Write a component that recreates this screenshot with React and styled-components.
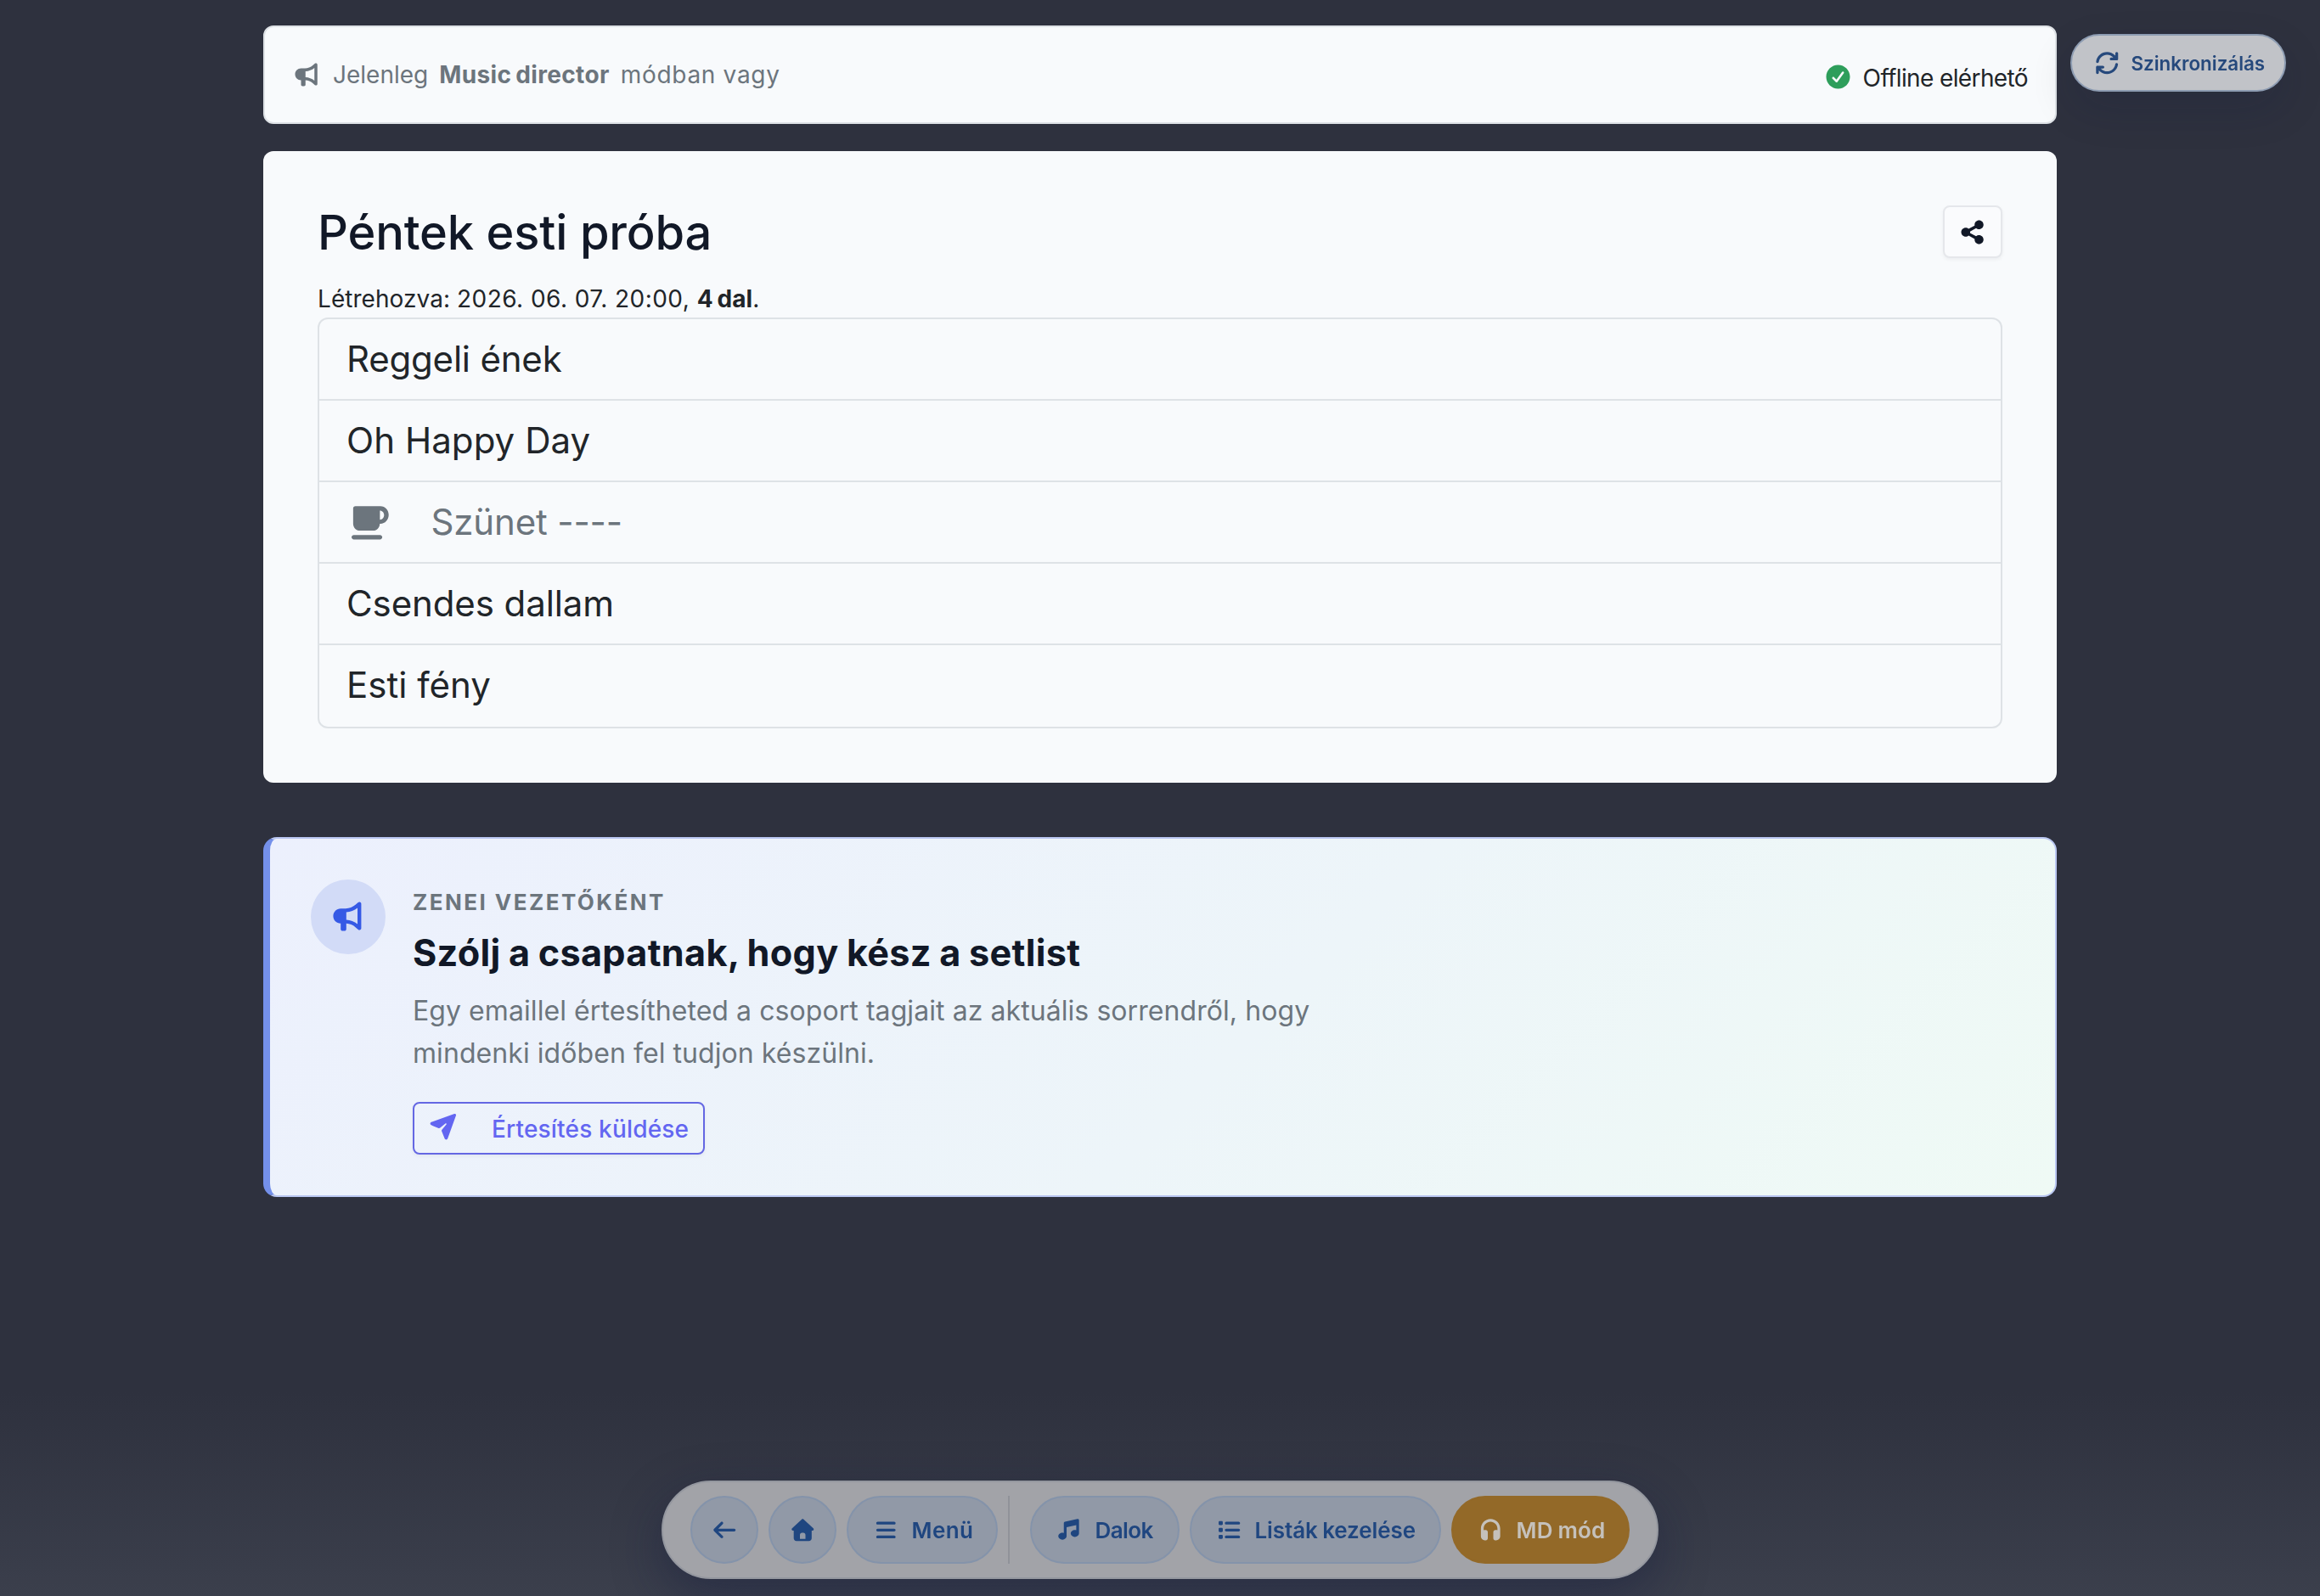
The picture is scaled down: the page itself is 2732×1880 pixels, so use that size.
/**
 *
 * SetlistPage
 *
 */

import React from 'react';
import styled, { createGlobalStyle, css } from 'styled-components';

const GlobalStyle = createGlobalStyle`
  * {
    box-sizing: border-box;
  }
  body {
    margin: 0;
    min-height: 1880px;
    background: linear-gradient(180deg, #2e313e 0, #2e313e 1640px, #3b3f4c 1880px);
    font-family: Inter, sans-serif;
    font-size: 28px;
    line-height: 42px;
    color: #212529;
  }
  h1, h2, p, ul {
    margin: 0;
    padding: 0;
  }
`;

// icons share a 640 grid
const ICONS = {
  bullhorn:
    'M525.2 82.9C536.7 88 544 99.4 544 112L544 528C544 540.6 536.7 552 525.2 557.1C513.7 562.2 500.4 560.3 490.9 552L444.3 511.3C400.7 473.2 345.6 451 287.9 448.3L287.9 544C287.9 561.7 273.6 576 255.9 576L223.9 576C206.2 576 191.9 561.7 191.9 544L191.9 448C121.3 448 64 390.7 64 320C64 249.3 121.3 192 192 192L276.5 192C338.3 191.8 397.9 169.3 444.4 128.7L491 88C500.4 79.7 513.9 77.8 525.2 82.9zM288 384L288 384.2C358.3 386.9 425.8 412.7 480 457.6L480 182.3C425.8 227.2 358.3 253 288 255.7L288 384z',
  check:
    'M320 576C178.6 576 64 461.4 64 320C64 178.6 178.6 64 320 64C461.4 64 576 178.6 576 320C576 461.4 461.4 576 320 576zM438 209.7C427.3 201.9 412.3 204.3 404.5 215L285.1 379.2L233 327.1C223.6 317.7 208.4 317.7 199.1 327.1C189.8 336.5 189.7 351.7 199.1 361L271.1 433C276.1 438 282.9 440.5 289.9 440C296.9 439.5 303.3 435.9 307.4 430.2L443.3 243.2C451.1 232.5 448.7 217.5 438 209.7z',
  share:
    'M448 256C501 256 544 213 544 160C544 107 501 64 448 64C395 64 352 107 352 160C352 165.4 352.5 170.8 353.3 176L223.6 248.1C206.7 233.1 184.4 224 160 224C107 224 64 267 64 320C64 373 107 416 160 416C184.4 416 206.6 406.9 223.6 391.9L353.3 464C352.4 469.2 352 474.5 352 480C352 533 395 576 448 576C501 576 544 533 544 480C544 427 501 384 448 384C423.6 384 401.4 393.1 384.4 408.1L254.7 336C255.6 330.8 256 325.5 256 320C256 314.5 255.5 309.2 254.7 304L384.4 231.9C401.3 246.9 423.6 256 448 256z',
  cup:
    'M128 88L488 88C554 88 606 144 606 214C606 284 554 341 488 341L478 341C476 396 438 440 384 440L192 440C138 440 96 396 96 342L96 120C96 102 110 88 128 88zM480 152L480 282C514 282 540 254 540 217C540 180 514 152 480 152zM106 502L482 502C499 502 514 517 514 534.5C514 552 499 567 482 567L106 567C88 567 73 552 73 534.5C73 517 88 502 106 502z',
  plane:
    'M568.4 37.7C578.2 34.2 589 36.7 596.4 44C603.8 51.3 606.2 62.2 602.7 72L424.7 568.9C419.7 582.8 406.6 592 391.9 592C377.7 592 364.9 583.4 359.6 570.3L295.4 412.3C290.9 401.3 292.9 388.7 300.6 379.7L395.1 267.3C400.2 261.2 399.8 252.3 394.2 246.7C388.6 241.1 379.6 240.7 373.6 245.8L261.2 340.1C252.1 347.7 239.6 349.7 228.6 345.3L70.1 280.8C57 275.5 48.4 262.7 48.4 248.5C48.4 233.8 57.6 220.7 71.5 215.7L568.4 37.7z',
  arrowLeft:
    'M73.4 297.4C60.9 309.9 60.9 330.2 73.4 342.7L233.4 502.7C245.9 515.2 266.2 515.2 278.7 502.7C291.2 490.2 291.2 469.9 278.7 457.4L173.3 352L544 352C561.7 352 576 337.7 576 320C576 302.3 561.7 288 544 288L173.3 288L278.7 182.6C291.2 170.1 291.2 149.8 278.7 137.3C266.2 124.8 245.9 124.8 233.4 137.3L73.4 297.3z',
  house:
    'M341.8 72.6C329.5 61.2 310.5 61.2 298.3 72.6L74.3 280.6C64.7 289.6 61.5 303.5 66.3 315.7C71.1 327.9 82.8 336 96 336L112 336L112 512C112 547.3 140.7 576 176 576L464 576C499.3 576 528 547.3 528 512L528 336L544 336C557.2 336 569 327.9 573.8 315.7C578.6 303.5 575.4 289.5 565.8 280.6L341.8 72.6zM304 384L336 384C362.5 384 384 405.5 384 432L384 528L256 528L256 432C256 405.5 277.5 384 304 384z',
  bars:
    'M96 160C96 142.3 110.3 128 128 128L512 128C529.7 128 544 142.3 544 160C544 177.7 529.7 192 512 192L128 192C110.3 192 96 177.7 96 160zM96 320C96 302.3 110.3 288 128 288L512 288C529.7 288 544 302.3 544 320C544 337.7 529.7 352 512 352L128 352C110.3 352 96 337.7 96 320zM96 480C96 462.3 110.3 448 128 448L512 448C529.7 448 544 462.3 544 480C544 497.7 529.7 512 512 512L128 512C110.3 512 96 497.7 96 480z',
  music:
    'M532 71C539.6 77.1 544 86.3 544 96L544 400C544 444.2 501 480 448 480C395 480 352 444.2 352 400C352 355.8 395 320 448 320C459.2 320 470 321.6 480 324.6L480 207.9L256 257.7L256 464C256 508.2 213 544 160 544C107 544 64 508.2 64 464C64 419.8 107 384 160 384C171.2 384 182 385.6 192 388.6L192 160C192 145 202.4 132 217.1 128.8L505.1 64.8C514.6 62.7 524.5 65 532.1 71.1z',
  list:
    'M104 112C90.7 112 80 122.7 80 136L80 184C80 197.3 90.7 208 104 208L152 208C165.3 208 176 197.3 176 184L176 136C176 122.7 165.3 112 152 112L104 112zM256 128C238.3 128 224 142.3 224 160C224 177.7 238.3 192 256 192L544 192C561.7 192 576 177.7 576 160C576 142.3 561.7 128 544 128L256 128zM256 288C238.3 288 224 302.3 224 320C224 337.7 238.3 352 256 352L544 352C561.7 352 576 337.7 576 320C576 302.3 561.7 288 544 288L256 288zM256 448C238.3 448 224 462.3 224 480C224 497.7 238.3 512 256 512L544 512C561.7 512 576 497.7 576 480C576 462.3 561.7 448 544 448L256 448zM80 296L80 344C80 357.3 90.7 368 104 368L152 368C165.3 368 176 357.3 176 344L176 296C176 282.7 165.3 272 152 272L104 272C90.7 272 80 282.7 80 296zM104 432C90.7 432 80 442.7 80 456L80 504C80 517.3 90.7 528 104 528L152 528C165.3 528 176 517.3 176 504L176 456C176 442.7 165.3 432 152 432L104 432z',
  headphones:
    'M160 288C160 199.6 231.6 128 320 128C408.4 128 480 199.6 480 288L480 325.5C470 322 459.2 320 448 320L432 320C405.5 320 384 341.5 384 368L384 512C384 538.5 405.5 560 432 560L448 560C501 560 544 517 544 464L544 288C544 164.3 443.7 64 320 64C196.3 64 96 164.3 96 288L96 464C96 517 139 560 192 560L208 560C234.5 560 256 538.5 256 512L256 368C256 341.5 234.5 320 208 320L192 320C180.8 320 170 321.9 160 325.5L160 288z',
  rotate:
    'M129.9 292.5C143.2 199.5 223.3 128 320 128C373 128 421 149.5 455.8 184.2C456 184.4 456.2 184.6 456.4 184.8L464 192L416.1 192C398.4 192 384.1 206.3 384.1 224C384.1 241.7 398.4 256 416.1 256L544.1 256C561.8 256 576.1 241.7 576.1 224L576.1 96C576.1 78.3 561.8 64 544.1 64C526.4 64 512.1 78.3 512.1 96L512.1 149.4L500.8 138.7C454.5 92.6 390.5 64 320 64C191 64 84.3 159.4 66.6 283.5C64.1 301 76.2 317.2 93.7 319.7C111.2 322.2 127.4 310 129.9 292.6zM573.4 356.5C575.9 339 563.7 322.8 546.3 320.3C528.9 317.8 512.6 330 510.1 347.4C496.8 440.4 416.7 511.9 320 511.9C267 511.9 219 490.4 184.2 455.7C184 455.5 183.8 455.3 183.6 455.1L176 447.9L223.9 447.9C241.6 447.9 255.9 433.6 255.9 415.9C255.9 398.2 241.6 383.9 223.9 383.9L96 384C87.5 384 79.3 387.4 73.3 393.5C67.3 399.6 63.9 407.7 64 416.3L65 543.3C65.1 561 79.6 575.2 97.3 575C115 574.8 129.2 560.4 129 542.7L128.6 491.2L139.3 501.3C185.6 547.4 249.5 576 320 576C449 576 555.7 480.6 573.4 356.5z',
};

const IconSvg = styled.svg`
  display: block;
  flex: none;
  width: ${props => props.$size}px;
  height: ${props => props.$size}px;
  margin-bottom: ${props => props.$lift || 0}px;
  fill: currentColor;
`;

const Icon = ({ name, size = 35, lift }) => (
  <IconSvg viewBox="0 0 640 640" $size={size} $lift={lift} aria-hidden="true">
    <path fillRule="evenodd" d={ICONS[name]} />
  </IconSvg>
);

const Label = styled.span`
  letter-spacing: ${props => props.$spacing || 0}px;
  word-spacing: ${props => props.$wordSpacing || 0}px;
  white-space: nowrap;
`;

const Page = styled.main`
  display: flex;
  flex-direction: column;
  width: 2112px;
  margin: 0 auto;
  padding-top: 30px;
`;

const ModeBar = styled.section`
  display: flex;
  justify-content: space-between;
  align-items: center;
  height: 116px;
  padding: 0 32px;
  background: #f8fafc;
  border: 2px solid #dee2e6;
  border-radius: 12px;
`;

const ModeText = styled.div`
  display: flex;
  align-items: center;
  gap: 13px;
  color: #6c757d;
`;

const OfflineStatus = styled.div`
  display: flex;
  align-items: center;
  gap: 12px;
  padding-top: 8px;
  svg {
    color: #2e9e5b;
  }
`;

const SetlistCard = styled.section`
  margin-top: 32px;
  padding: 64px;
  background: #f8fafc;
  border-radius: 12px;
`;

const SetlistHeader = styled.header`
  display: flex;
  justify-content: space-between;
  align-items: flex-start;
  height: 89px;
`;

const SetlistTitle = styled.h1`
  font-size: 56px;
  font-weight: 500;
  line-height: 64px;
  letter-spacing: -0.17px;
  color: #111827;
`;

const ShareButton = styled.button`
  display: flex;
  align-items: center;
  justify-content: center;
  width: 70px;
  height: 62px;
  padding: 0;
  color: #111827;
  background: #fafbfd;
  border: 2px solid #e5e7eb;
  border-radius: 8px;
  box-shadow: 0 2px 4px rgba(0, 0, 0, 0.05);
`;

const CreatedAt = styled.p`
  height: 43px;
  white-space: nowrap;
`;

const SongList = styled.ul`
  list-style: none;
  border: 2px solid #dee2e6;
  border-radius: 12px;
`;

const SongRow = styled.li`
  display: flex;
  align-items: center;
  gap: 47px;
  height: 96px;
  padding: 0 32px;
  font-size: 42px;
  color: ${props => (props.$pause ? '#6c757d' : '#212529')};
  border-bottom: 2px solid #dee2e6;
  &:last-child {
    border-bottom-color: transparent;
  }
`;

const NoticeCard = styled.section`
  display: flex;
  align-items: flex-start;
  gap: 32px;
  height: 424px;
  margin-top: 64px;
  padding: 48px;
  background: linear-gradient(135deg, #ecf0fd 0%, #edf5f9 55%, #effaf5 100%);
  border: 2px solid #b9c6f1;
  border-left: 8px solid #7490ea;
  border-radius: 16px;
`;

const NoticeIcon = styled.div`
  display: flex;
  align-items: center;
  justify-content: center;
  flex: none;
  width: 88px;
  height: 88px;
  color: #3559e5;
  background: #d2dbf7;
  border-radius: 50%;
`;

const NoticeBody = styled.div`
  display: flex;
  flex-direction: column;
  align-items: flex-start;
  padding-top: 7px;
`;

const Eyebrow = styled.p`
  font-size: 26px;
  font-weight: 700;
  line-height: 40px;
  letter-spacing: 2.45px;
  text-transform: uppercase;
  color: #6c757d;
`;

const NoticeTitle = styled.h2`
  margin-top: 13px;
  font-size: 43.2px;
  font-weight: 700;
  line-height: 52px;
  letter-spacing: 0.32px;
  word-spacing: -1.2px;
  color: #111827;
`;

const NoticeText = styled.p`
  width: 1120px;
  margin-top: 18px;
  font-size: 32px;
  line-height: 50px;
  letter-spacing: 0.07px;
  color: #6c757d;
`;

const NotifyButton = styled.button`
  display: flex;
  align-items: center;
  gap: 40px;
  width: 344px;
  height: 62px;
  margin-top: 32px;
  padding: 0 16px;
  font: 500 28px Inter, sans-serif;
  color: #6366f1;
  background: transparent;
  border: 2px solid #6467e3;
  border-radius: 8px;
  box-shadow: 0 2px 4px rgba(0, 0, 0, 0.05);
  span {
    padding-top: 2px;
  }
`;

const pill = css`
  display: flex;
  align-items: center;
  border-radius: 999px;
`;

const SyncButton = styled.button`
  ${pill}
  position: fixed;
  top: 40px;
  right: 40px;
  gap: 12px;
  width: 254px;
  height: 68px;
  padding: 0 0 0 25px;
  font: 600 22.4px Inter, sans-serif;
  color: #26497c;
  background: #c1c3c8;
  border: 2px solid #8d9cb2;
  box-shadow: 0 20px 50px rgba(15, 23, 60, 0.16);
`;

const Toolbar = styled.nav`
  ${pill}
  position: fixed;
  left: 50%;
  bottom: 20px;
  transform: translateX(-50%);
  gap: 12px;
  width: 1174px;
  height: 116px;
  padding: 0 32px;
  background: #a2a3a8;
  border: 2px solid #94979f;
  box-shadow: 0 20px 60px rgba(15, 23, 60, 0.4);
`;

const ToolbarButton = styled.button`
  ${pill}
  gap: 14px;
  width: ${props => props.$width || 80}px;
  height: 80px;
  padding: 0 0 0 ${props => (props.$width ? 28 : 22)}px;
  font: 600 26px Inter, sans-serif;
  color: ${props => (props.$active ? '#c5c1bb' : '#1f4680')};
  background: ${props => (props.$active ? '#936928' : '#9199a7')};
  border: 2px solid ${props => (props.$active ? '#936928' : '#8493aa')};
`;

const ToolbarDivider = styled.span`
  width: 2px;
  height: 80px;
  margin-right: 12px;
  background: #909299;
`;

const songs = [
  { title: 'Reggeli ének', spacing: -0.2 },
  { title: 'Oh Happy Day', spacing: 0.06 },
  { title: 'Szünet ----', spacing: -0.15, pause: true },
  { title: 'Csendes dallam', spacing: -0.1 },
  { title: 'Esti fény' },
];

const MENU = [
  { icon: 'arrowLeft' },
  { icon: 'house' },
  { icon: 'bars', label: 'Menü', width: 178, spacing: 0.4, divider: true },
  { icon: 'music', label: 'Dalok', width: 176, spacing: -0.6 },
  { icon: 'list', label: 'Listák kezelése', width: 296, spacing: -0.1, wordSpacing: -1 },
  { icon: 'headphones', label: 'MD mód', width: 210, spacing: 0.2, wordSpacing: -1, active: true },
];

export default function SetlistPage() {
  return (
    <>
      <GlobalStyle />
      <Page>
        <ModeBar>
          <ModeText>
            <Icon name="bullhorn" lift={2} />
            <Label>Jelenleg</Label>
            <Label as="b" $spacing={0.35} $wordSpacing={-2}>Music director</Label>
            <Label $spacing={0.7}>módban vagy</Label>
          </ModeText>
          <OfflineStatus>
            <Icon name="check" lift={4} />
            <Label $spacing={-0.62}>Offline elérhető</Label>
          </OfflineStatus>
        </ModeBar>

        <SetlistCard>
          <SetlistHeader>
            <SetlistTitle>Péntek esti próba</SetlistTitle>
            <ShareButton aria-label="Megosztás">
              <Icon name="share" />
            </ShareButton>
          </SetlistHeader>
          <CreatedAt>
            <Label $spacing={0.05}>Létrehozva: </Label>
            <Label $spacing={0.46}>2026. 06. 07. 20:00, </Label>
            <Label as="b" $spacing={0.1} $wordSpacing={-2}>4 dal</Label>.
          </CreatedAt>
          <SongList>
            {songs.map(song => (
              <SongRow key={song.title} $pause={song.pause}>
                {song.pause && <Icon name="cup" size={52.5} />}
                <Label $spacing={song.spacing}>{song.title}</Label>
              </SongRow>
            ))}
          </SongList>
        </SetlistCard>

        <NoticeCard>
          <NoticeIcon>
            <Icon name="bullhorn" size={44} lift={2} />
          </NoticeIcon>
          <NoticeBody>
            <Eyebrow>Zenei vezetőként</Eyebrow>
            <NoticeTitle>Szólj a csapatnak, hogy kész a setlist</NoticeTitle>
            <NoticeText>
              Egy emaillel értesítheted a csoport tagjait az aktuális sorrendről, hogy mindenki
              időben fel tudjon készülni.
            </NoticeText>
            <NotifyButton>
              <Icon name="plane" lift={4} />
              <Label $spacing={0.18}>Értesítés küldése</Label>
            </NotifyButton>
          </NoticeBody>
        </NoticeCard>
      </Page>

      <SyncButton>
        <Icon name="rotate" size={32.5} />
        <Label>Szinkronizálás</Label>
      </SyncButton>

      <Toolbar>
        {MENU.map(item => (
          <React.Fragment key={item.icon}>
            <ToolbarButton $width={item.width} $active={item.active}>
              <Icon name={item.icon} size={32.5} />
              {item.label && (
                <Label $spacing={item.spacing} $wordSpacing={item.wordSpacing}>{item.label}</Label>
              )}
            </ToolbarButton>
            {item.divider && <ToolbarDivider />}
          </React.Fragment>
        ))}
      </Toolbar>
    </>
  );
}
